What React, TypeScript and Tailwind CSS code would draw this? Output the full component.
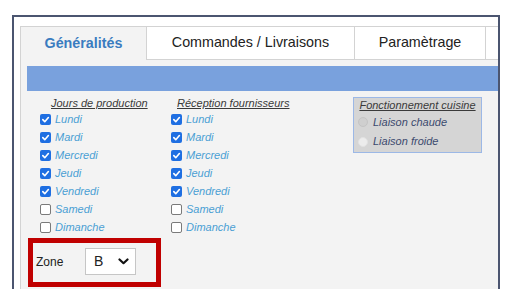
import React from 'react'

const days = [
  { name: 'Lundi', on: true },
  { name: 'Mardi', on: true },
  { name: 'Mercredi', on: true },
  { name: 'Jeudi', on: true },
  { name: 'Vendredi', on: true },
  { name: 'Samedi', on: false },
  { name: 'Dimanche', on: false },
]

function Check({ on }: { on: boolean }) {
  if (on) {
    return (
      <span className="flex h-[11px] w-[11px] shrink-0 items-center justify-center rounded-[2px] bg-[#1f6fe2]">
        <svg width="9" height="9" viewBox="0 0 10 10">
          <path d="M2 5.2 L4.2 7.4 L8.2 2.8" fill="none" stroke="white" strokeWidth="1.8" strokeLinecap="round" strokeLinejoin="round" />
        </svg>
      </span>
    )
  }
  return <span className="h-[11px] w-[11px] shrink-0 rounded-[2px] border border-[#7a7a7a] bg-white" />
}

function DayColumn({ title, width, indent }: { title: string; width: string; indent: string }) {
  return (
    <div className={`flex flex-col pt-[6px] ${width}`}>
      <div className={`h-[13px] leading-[13px] italic text-[#3a3a3a] underline ${indent}`}>{title}</div>
      {days.map((d) => (
        <label key={d.name} className="flex h-[18px] items-center gap-[4px]">
          <Check on={d.on} />
          <span className="italic text-[#4a9fd4]">{d.name}</span>
        </label>
      ))}
    </div>
  )
}

export default function App() {
  return (
    <div className="h-[289px] w-[506px] overflow-hidden bg-white pl-[12px] pr-[6px] pt-[15px] font-['Liberation_Sans',Arial,sans-serif]">
      <div className="flex h-[290px] flex-col overflow-hidden border-2 border-b-0 border-[#4b5570] bg-white pl-[6px] pt-[9px]">
        {/* tabs */}
        <div className="flex h-[34px] shrink-0 text-[14.3px]">
          <div className="flex w-[126px] shrink-0 items-center justify-center border-l border-t border-[#d3d3d3] bg-[#f3f3f3] font-bold text-[#3a7cc0]">
            Généralités
          </div>
          <div className="flex w-[208px] shrink-0 items-center justify-center border-b border-l border-t border-[#d3d3d3] bg-white text-[#222]">
            Commandes / Livraisons
          </div>
          <div className="flex w-[131px] shrink-0 items-center justify-center border-b border-l border-t border-[#d3d3d3] bg-white text-[#222]">
            Paramètrage
          </div>
          <div className="w-[60px] shrink-0 border-b border-l border-t border-[#d3d3d3] bg-white" />
        </div>

        {/* panel */}
        <div className="flex flex-1 flex-col border-l border-[#d3d3d3] bg-[#f3f3f3] pl-[6px] pt-[6px] text-[11px]">
          <div className="h-[25px] shrink-0 bg-[#79a1dd]" />

          <div className="flex">
            <div className="flex flex-col">
              <div className="flex pl-[13px]">
                <DayColumn title="Jours de production" width="w-[131px]" indent="pl-[11px]" />
                <DayColumn title="Réception fournisseurs" width="w-[182px]" indent="pl-[6px]" />
              </div>

              {/* zone */}
              <div className="ml-[1px] mt-[2px] flex h-[49px] w-[133px] items-center border-[5px] border-[#c00000] pb-[3px] pl-[3px]">
                <span className="mt-[2px] w-[49px] text-[12px] text-[#222]">Zone</span>
                <div className="flex h-[27px] w-[51px] items-center justify-between border border-[#c6c6c6] bg-white pl-[8px] pr-[6px] text-[14px] text-[#222]">
                  <span>B</span>
                  <svg width="11" height="7" viewBox="0 0 11 7">
                    <path d="M1.5 1.5 L5.5 5.2 L9.5 1.5" fill="none" stroke="#111" strokeWidth="2.2" strokeLinecap="round" strokeLinejoin="round" />
                  </svg>
                </div>
              </div>
            </div>

            {/* fonctionnement cuisine */}
            <div className="mt-[6px] flex h-[56px] w-[129px] shrink-0 flex-col self-start border border-[#9cb8e6] bg-[#d5d5d5] pl-[4px]">
              <div className="h-[14px] pr-[4px] text-center leading-[14px] italic text-[#3a3a3a] underline">
                Fonctionnement cuisine
              </div>
              <div className="flex h-[20px] items-center gap-[5px]">
                <span className="h-[10px] w-[10px] rounded-full border border-[#c4c4c4] bg-[#cfcfcf]" />
                <span className="italic text-[#3c4a6e]">Liaison chaude</span>
              </div>
              <div className="flex h-[19px] items-center gap-[5px]">
                <span className="h-[10px] w-[10px] rounded-full border border-[#e2e2e2] bg-[#ececec]" />
                <span className="italic text-[#3c4a6e]">Liaison froide</span>
              </div>
            </div>
          </div>
        </div>
      </div>
    </div>
  )
}
